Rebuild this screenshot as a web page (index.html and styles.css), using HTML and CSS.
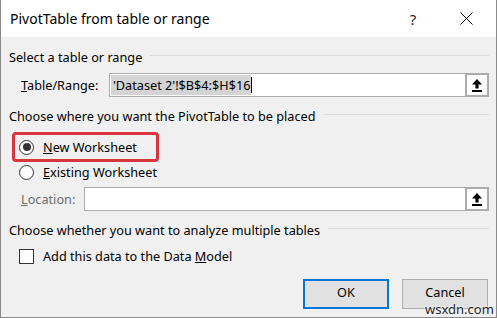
FILE: index.html
```html
<!DOCTYPE html>
<html lang="en">
  <head>
    <meta charset="UTF-8" />
    <title>PivotTable from table or range</title>
    <link rel="stylesheet" href="styles.css">
  </head>
  <body>
    <div class="dialog">
      <div class="titlebar">
        <span class="title">PivotTable from table or range</span>
        <span class="help">?</span>
        <span class="close">
          <svg width="13" height="13" viewBox="0 0 13 13">
            <path d="M0.5 0.5 L12.5 12.5 M12.5 0.5 L0.5 12.5" stroke="#000" stroke-width="1" fill="none" />
          </svg>
        </span>
      </div>

      <div class="content">
        <div class="group-title first"><span>Select a table or range</span><i></i></div>
        <div class="field-row">
          <label class="field-label range-label"><u>T</u>able/Range:</label>
          <div class="ref-box">
            <div class="ref-input"><span class="selected">'Dataset 2'!$B$4:$H$16</span><span class="caret"></span></div>
            <button class="ref-btn">
              <svg width="12" height="14" viewBox="0 0 12 14">
                <path d="M6 1 L11 6.5 H7.6 V10.5 H4.4 V6.5 H1 Z" fill="#000" />
                <rect x="1" y="12" width="10" height="2" fill="#000" />
              </svg>
            </button>
          </div>
        </div>

        <div class="group-title"><span>Choose where you want the PivotTable to be placed</span><i></i></div>
        <div class="highlight">
          <div class="option"><span class="radio checked"></span><span><u>N</u>ew Worksheet</span></div>
        </div>
        <div class="option plain"><span class="radio"></span><span><u>E</u>xisting Worksheet</span></div>
        <div class="field-row location-row">
          <label class="field-label disabled location-label"><u>L</u>ocation:</label>
          <div class="ref-box">
            <div class="ref-input"></div>
            <button class="ref-btn">
              <svg width="12" height="14" viewBox="0 0 12 14">
                <path d="M6 1 L11 6.5 H7.6 V10.5 H4.4 V6.5 H1 Z" fill="#000" />
                <rect x="1" y="12" width="10" height="2" fill="#000" />
              </svg>
            </button>
          </div>
        </div>

        <div class="group-title"><span>Choose whether you want to analyze multiple tables</span><i></i></div>
        <div class="option plain check-row"><span class="checkbox"></span><span>Add this data to the Data <u>M</u>odel</span></div>

        <div class="actions">
          <button class="btn default">OK</button>
          <button class="btn">Cancel</button>
        </div>
      </div>

      <div class="watermark">wsxdn.com</div>
    </div>
  </body>
</html>
```

FILE: styles.css
```css
* {
  box-sizing: border-box;
  margin: 0;
  padding: 0;
}
body {
  font-family: "Segoe UI", "Noto Sans", sans-serif;
  font-size: 12.7px;
  color: #000;
  background: #f0f0f0;
}
.dialog {
  position: relative;
  width: 497px;
  height: 318px;
  background: #f0f0f0;
  border: 1px solid #8a8a8a;
  border-top: none;
  overflow: hidden;
}

/* Title bar */
.titlebar {
  height: 37px;
  background: #fff;
  display: flex;
  align-items: center;
  padding-left: 9px;
}
.title {
  font-size: 14px;
  flex: 1;
}
.help {
  font-size: 15px;
  width: 20px;
  text-align: center;
  margin-right: 37px;
  color: #222;
}
.close {
  display: flex;
  margin-right: 23px;
}

/* Content */
.content {
  padding: 11px 7px 0 8px;
}
.group-title {
  display: flex;
  align-items: center;
  height: 18px;
  margin-top: 10px;
}
.group-title.first {
  margin-top: 0;
}
.group-title i {
  flex: 1;
  height: 1px;
  background: #dcdcdc;
  margin: 0 0 4px 8px;
}
.field-row {
  display: flex;
  align-items: center;
  margin-top: 7px;
  padding-left: 12px;
}
.field-label {
  width: 88px;
}
.location-label {
  width: 63px;
}
.disabled {
  color: #6d6d6d;
}
.ref-box {
  flex: 1;
  display: flex;
  height: 24px;
}
.ref-input {
  flex: 1;
  background: #fff;
  border: 1px solid #adadad;
  border-right: none;
  display: flex;
  align-items: center;
  padding-left: 1px;
}
.selected {
  background: #d4d4d4;
  line-height: 20px;
  padding: 0 1px 0 2px;
}
.caret {
  width: 1px;
  height: 16px;
  background: #000;
}
.ref-btn {
  width: 24px;
  height: 24px;
  border: 2px solid #adadad;
  background: #fff;
  display: flex;
  align-items: center;
  justify-content: center;
}

/* Options */
.highlight {
  margin: 7px 0 0 3px;
  width: 147px;
  height: 30px;
  border: 3px solid #d7363f;
  border-radius: 4px;
  display: flex;
  align-items: center;
  padding-left: 4px;
}
.option {
  display: flex;
  align-items: center;
  gap: 9px;
  height: 20px;
}
.option.plain {
  padding-left: 10px;
}
.radio {
  width: 15px;
  height: 15px;
  border: 1px solid #333;
  border-radius: 50%;
  background: #fff;
  display: flex;
  align-items: center;
  justify-content: center;
}
.radio.checked::after {
  content: "";
  width: 8px;
  height: 8px;
  border-radius: 50%;
  background: #333;
}
.location-row {
  margin-top: 5px;
}
.checkbox {
  width: 15px;
  height: 15px;
  border: 1px solid #333;
  background: #fff;
}
.check-row {
  margin-top: 7px;
}

/* Buttons */
.actions {
  display: flex;
  justify-content: flex-end;
  gap: 13px;
  margin-top: 13px;
  padding-right: 1px;
}
.btn {
  width: 86px;
  height: 30px;
  font: inherit;
  line-height: 13px;
  padding-bottom: 3px;
  background: #e1e1e1;
  border: 1px solid #adadad;
  color: #000;
}
.btn.default {
  border: 2px solid #0078d7;
}

.watermark {
  position: absolute;
  left: 424px;
  top: 304px;
  font-size: 13px;
  line-height: 11px;
  color: #222;
  text-shadow: 0 0 2px #fff, 0 0 2px #fff;
}
```
